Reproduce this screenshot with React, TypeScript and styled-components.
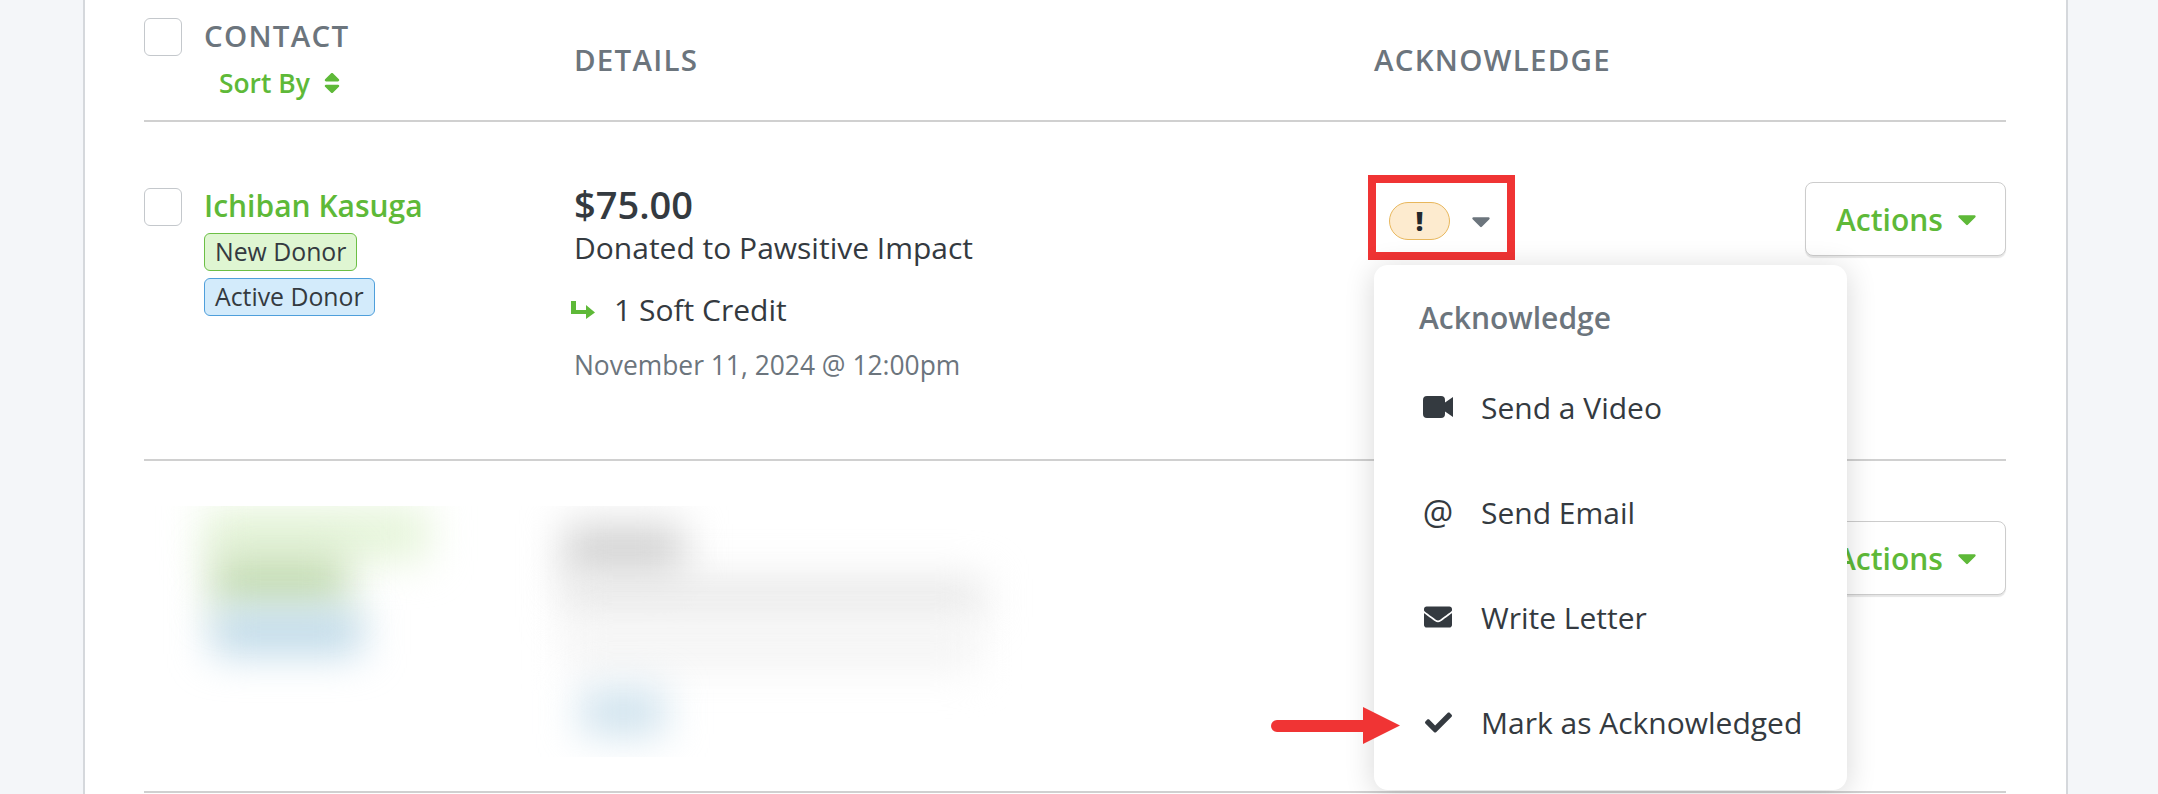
import React from 'react';
import styled, {createGlobalStyle} from 'styled-components';
import {FaCaretDown, FaCheck, FaEnvelope, FaSort} from 'react-icons/fa';

const green = '#5eb938';
const dark = '#343a40';
const gray = '#6c757d';
const line = '#d0d0d0';

const GlobalStyle = createGlobalStyle`
  html, body {
    margin: 0;
    background: #f4f6f9;
    font-family: "Open Sans", "Liberation Sans", sans-serif;
    color: ${dark};
  }
`
const Card = styled.div`
  box-sizing: border-box;
  width: 1985px;
  height: 794px;
  margin-left: 83px;
  padding: 0 60px 0 59px;
  background: #fff;
  border-left: 2px solid #d5d8dc;
  border-right: 2px solid #d5d8dc;
  overflow: hidden;
`
const Row = styled.div<{ $height: number }>`
  display: grid;
  grid-template-columns: 430px 800px 632px;
  height: ${p => p.$height}px;
  box-sizing: border-box;
  border-bottom: 2px solid ${line};
`
const Cell = styled.div`
  position: relative;
`
const ContactHead = styled.div`
  display: flex;
  gap: 22px;
  padding-top: 18px;
`
const ContactBody = styled.div`
  display: flex;
  gap: 22px;
  padding-top: 66px;
`
const Checkbox = styled.div`
  box-sizing: border-box;
  flex: none;
  width: 38px;
  height: 38px;
  border: 1px solid #c4c8cc;
  border-radius: 6px;
  background: #fff;
`
const HeadLabel = styled.div<{ $top?: number }>`
  padding-top: ${p => p.$top ?? 0}px;
  font-size: 29.5px;
  line-height: 36px;
  font-weight: 600;
  letter-spacing: 1.25px;
  color: ${gray};
`
const SortBy = styled.div`
  display: flex;
  align-items: center;
  gap: 9px;
  margin: 13px 0 0 15px;
  font-size: 26.4px;
  line-height: 32px;
  font-weight: 600;
  color: ${green};
`
const Name = styled.div`
  font-size: 30px;
  line-height: 36px;
  font-weight: 600;
  color: ${green};
`
const Tags = styled.div`
  display: flex;
  flex-direction: column;
  align-items: flex-start;
  gap: 7px;
  margin-top: 9px;
`
const Tag = styled.div<{ $kind: 'green' | 'blue' }>`
  box-sizing: border-box;
  height: 38px;
  padding: 0 10px;
  font-size: 24.8px;
  line-height: 35px;
  font-weight: 500;
  border-radius: 6px;
  border: 1px solid ${p => p.$kind === 'green' ? '#6cbf45' : '#4f9fdb'};
  background: ${p => p.$kind === 'green' ? '#dff6d2' : '#d3ebfb'};
`
const Details = styled.div`
  padding-top: 58px;
`
const Amount = styled.div`
  font-size: 38px;
  line-height: 49px;
  font-weight: 600;
`
const Target = styled.div`
  font-size: 30px;
  line-height: 38px;
`
const Credit = styled.div`
  display: flex;
  align-items: center;
  gap: 19px;
  margin-top: 24px;
  margin-left: -3px;
  font-size: 30px;
  line-height: 38px;
`
const DateLine = styled.div`
  margin-top: 18px;
  font-size: 26.4px;
  line-height: 36px;
  color: ${gray};
`
const AckCell = styled(Cell)`
  display: flex;
  justify-content: space-between;
  align-items: flex-start;
  padding-left: 15px;
`
const Status = styled.div`
  position: relative;
  display: flex;
  align-items: center;
  gap: 16px;
  margin-top: 80px;
`
const Pill = styled.div`
  box-sizing: border-box;
  display: flex;
  align-items: center;
  justify-content: center;
  width: 61px;
  height: 38px;
  border: 1px solid #e8b75c;
  border-radius: 19px;
  background: #fdebcf;
  color: #23282c;
  font-size: 26px;
  font-weight: 800;
`
const RedBox = styled.div`
  position: absolute;
  left: -21px;
  top: -27px;
  width: 147px;
  height: 85px;
  box-sizing: border-box;
  border: 8px solid #f03434;
`
const ActionsButton = styled.div<{ $top: number }>`
  box-sizing: border-box;
  display: flex;
  align-items: center;
  gap: 9px;
  width: 201px;
  height: 74px;
  margin-top: ${p => p.$top}px;
  padding-left: 30px;
  background: #fff;
  border: 1px solid #cccccc;
  border-radius: 8px;
  box-shadow: 0 2px 1px rgba(0, 0, 0, 0.1);
  color: ${green};
  font-size: 30px;
  font-weight: 600;
`
const Menu = styled.div`
  position: absolute;
  left: 0;
  top: 143px;
  z-index: 2;
  box-sizing: border-box;
  width: 473px;
  height: 525px;
  padding: 33px 0 0 45px;
  background: #fff;
  border-radius: 14px;
  box-shadow: 0 4px 30px rgba(0, 0, 0, 0.16);
`
const MenuTitle = styled.div`
  font-size: 30px;
  line-height: 40px;
  font-weight: 600;
  color: ${gray};
`
const MenuList = styled.div`
  display: flex;
  flex-direction: column;
  gap: 65px;
  margin-top: 49px;
`
const MenuItem = styled.div`
  position: relative;
  display: flex;
  align-items: center;
  height: 40px;
  font-size: 30px;
`
const MenuIcon = styled.span`
  display: flex;
  justify-content: center;
  flex: none;
  width: 38px;
  margin-right: 24px;
  font-size: 28px;
  color: ${dark};
`
const AtIcon = styled(MenuIcon)`
  font-size: 34px;
  line-height: 40px;
`
const RedArrow = styled.svg`
  position: absolute;
  left: -148px;
  top: 5px;
`
const BlurClip = styled.div`
  position: relative;
  height: 251px;
  margin-top: 45px;
  clip-path: inset(0 -80px);
`
const Blob = styled.div<{ $x: number; $y: number; $w: number; $h: number; $color: string }>`
  position: absolute;
  left: ${p => p.$x}px;
  top: ${p => p.$y}px;
  width: ${p => p.$w}px;
  height: ${p => p.$h}px;
  background: ${p => p.$color};
  filter: blur(20px);
`

const SoftCreditIcon = () => (
    <svg width="24" height="18" viewBox="0 0 24 18">
        <path fill={green} d="M0 0h5v9h10V4l9 7.5-9 6.5v-5H0z"/>
    </svg>
)

const VideoIcon = () => (
    <svg width="30" height="22" viewBox="0 0 30 22">
        <path fill={dark} d="M4 0h14a4 4 0 0 1 4 4v2.5L30 1v20l-8-5.500V18a4 4 0 0 1-4 4H4a4 4 0 0 1-4-4V4a4 4 0 0 1 4-4z"/>
    </svg>
)

const App = () => {
    return (
        <>
            <GlobalStyle/>
            <Card>
                <Row $height={122}>
                    <Cell>
                        <ContactHead>
                            <Checkbox/>
                            <div>
                                <HeadLabel>CONTACT</HeadLabel>
                                <SortBy>Sort By <FaSort size={26}/></SortBy>
                            </div>
                        </ContactHead>
                    </Cell>
                    <Cell><HeadLabel $top={42}>DETAILS</HeadLabel></Cell>
                    <Cell><HeadLabel $top={42}>ACKNOWLEDGE</HeadLabel></Cell>
                </Row>
                <Row $height={339}>
                    <Cell>
                        <ContactBody>
                            <Checkbox/>
                            <div>
                                <Name>Ichiban Kasuga</Name>
                                <Tags>
                                    <Tag $kind="green">New Donor</Tag>
                                    <Tag $kind="blue">Active Donor</Tag>
                                </Tags>
                            </div>
                        </ContactBody>
                    </Cell>
                    <Details>
                        <Amount>$75.00</Amount>
                        <Target>Donated to Pawsitive Impact</Target>
                        <Credit><SoftCreditIcon/>1 Soft Credit</Credit>
                        <DateLine>November 11, 2024 @ 12:00pm</DateLine>
                    </Details>
                    <AckCell>
                        <Status>
                            <RedBox/>
                            <Pill>!</Pill>
                            <FaCaretDown size={30} color={gray}/>
                        </Status>
                        <ActionsButton $top={60}>Actions <FaCaretDown size={30}/></ActionsButton>
                        <Menu>
                            <MenuTitle>Acknowledge</MenuTitle>
                            <MenuList>
                                <MenuItem><MenuIcon><VideoIcon/></MenuIcon>Send a Video</MenuItem>
                                <MenuItem><AtIcon>@</AtIcon>Send Email</MenuItem>
                                <MenuItem><MenuIcon><FaEnvelope/></MenuIcon>Write Letter</MenuItem>
                                <MenuItem>
                                    <RedArrow width="129" height="37" viewBox="0 0 129 37">
                                        <path fill="#f03434" d="M6 13h86V0l37 18.500L92 37V25H6a6 6 0 0 1 0-12z"/>
                                    </RedArrow>
                                    <MenuIcon><FaCheck size={27}/></MenuIcon>Mark as Acknowledged
                                </MenuItem>
                            </MenuList>
                        </Menu>
                    </AckCell>
                </Row>
                <Row $height={332}>
                    <BlurClip>
                        <Blob $x={60} $y={0} $w={225} $h={55} $color="#e6f5da"/>
                        <Blob $x={68} $y={48} $w={135} $h={55} $color="#c4dcb2"/>
                        <Blob $x={68} $y={104} $w={150} $h={44} $color="#bcd8e8"/>
                    </BlurClip>
                    <BlurClip>
                        <Blob $x={-10} $y={18} $w={120} $h={56} $color="#d4d4d4"/>
                        <Blob $x={-10} $y={72} $w={420} $h={40} $color="#e8e8e8"/>
                        <Blob $x={-10} $y={118} $w={415} $h={46} $color="#f4f4f4"/>
                        <Blob $x={7} $y={184} $w={84} $h={44} $color="#cbe0ec"/>
                    </BlurClip>
                    <AckCell>
                        <span/>
                        <ActionsButton $top={60}>Actions <FaCaretDown size={30}/></ActionsButton>
                    </AckCell>
                </Row>
            </Card>
        </>
    );
}

export default App;
